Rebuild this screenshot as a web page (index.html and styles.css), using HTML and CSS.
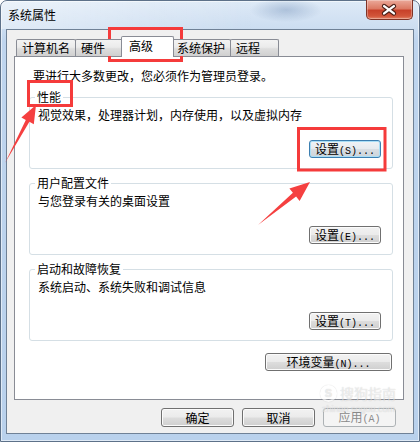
FILE: index.html
```html
<!DOCTYPE html>
<html lang="zh-CN">

<head>
  <meta charset="UTF-8">
  <meta name="viewport" content="width=device-width, initial-scale=1.0">
  <title>系统属性</title>
  <link rel="stylesheet" href="styles.css">
</head>

<body>
  <div class="screen">
    <div class="window">
      <div class="titlebar">
        <span class="title">系统属性</span>
        <div class="close">
          <svg width="47" height="20" viewBox="0 0 47 20">
            <path d="M18.5 6 L28.5 13.5 M28.5 6 L18.5 13.5" stroke="#4a1f17" stroke-width="4.6" stroke-linecap="round" fill="none"/>
            <path d="M18.5 6 L28.5 13.5 M28.5 6 L18.5 13.5" stroke="#fff" stroke-width="2.4" stroke-linecap="round" fill="none"/>
          </svg>
        </div>
      </div>

      <div class="client">
        <div class="tabs">
          <div class="tab">计算机名</div>
          <div class="tab">硬件</div>
          <div class="tab active">高级</div>
          <div class="tab">系统保护</div>
          <div class="tab">远程</div>
        </div>

        <div class="panel">
          <p class="notice">要进行大多数更改，您必须作为管理员登录。</p>

          <fieldset class="group">
            <legend>性能</legend>
            <p class="desc">视觉效果，处理器计划，内存使用，以及虚拟内存</p>
            <div class="actions"><button class="btn default">设置<span class="key">(S)...</span></button></div>
          </fieldset>

          <fieldset class="group">
            <legend>用户配置文件</legend>
            <p class="desc">与您登录有关的桌面设置</p>
            <div class="actions"><button class="btn">设置<span class="key">(E)...</span></button></div>
          </fieldset>

          <fieldset class="group">
            <legend>启动和故障恢复</legend>
            <p class="desc">系统启动、系统失败和调试信息</p>
            <div class="actions"><button class="btn">设置<span class="key">(T)...</span></button></div>
          </fieldset>

          <div class="env"><button class="btn wide">环境变量<span class="key">(N)...</span></button></div>
        </div>

        <div class="footer">
          <button class="btn dialog">确定</button>
          <button class="btn dialog">取消</button>
          <button class="btn dialog" disabled>应用<span class="key">(A)</span></button>
        </div>
      </div>
    </div>

    <div class="watermark">
      <div class="wm-top"><span class="wm-logo">S</span><span>搜狗指南</span></div>
      <div class="wm-url">zhinan.sogou.com</div>
    </div>

    <svg class="marks" width="420" height="442" viewBox="0 0 420 442">
      <rect x="109.5" y="28.5" width="72" height="32" fill="none" stroke="#f53b3b" stroke-width="3"/>
      <rect x="28.5" y="81.5" width="43" height="24" fill="none" stroke="#f53b3b" stroke-width="3"/>
      <rect x="298.5" y="128.5" width="86.5" height="41.5" fill="none" stroke="#f53b3b" stroke-width="3"/>
      <polygon points="5,163 25.8,120 21.4,117.6 36,105 33.8,124.2 29.4,121.8" fill="#f54040"/>
      <polygon points="258,225 292.9,192.8 289.4,188.5 310,182 299.6,200.9 296.1,196.6" fill="#f54040"/>
    </svg>
  </div>
</body>

</html>
```

FILE: styles.css
```css
* {
  box-sizing: border-box;
}

body {
  margin: 0;
  overflow: hidden;
  font-family: "Noto Sans CJK SC", "Noto Sans", sans-serif;
  font-size: 12px;
  color: #000;
}

.screen {
  width: 420px;
  height: 442px;
  position: relative;
}

.window {
  width: 420px;
  height: 442px;
  display: flex;
  flex-direction: column;
  padding: 0 5px 7px 5px;

  border: 1px solid #5d7189;
  border-radius: 7px 7px 0 0;
  background: linear-gradient(180deg, #deeaf7 0, #cddef1 26px, #bfd5ee 40px, #b9d1ec 100%);
  box-shadow: inset 0 0 0 1px rgba(255, 255, 255, 0.55);
}

/* title bar */

.titlebar {
  height: 28px;
  margin: 0 -5px;
  padding-left: 7px;
  display: flex;
  align-items: center;
  background:
    radial-gradient(ellipse 36px 12px at 285px 9px, rgba(110, 140, 180, 0.4), transparent),
    linear-gradient(90deg, rgba(255, 255, 255, 0.4), rgba(255, 255, 255, 0) 60%);
  border-radius: 6px 6px 0 0;
}

.title {
  line-height: 14px;
}

.close {
  width: 47px;
  height: 20px;
  margin: -1px 6px 0 auto;
  align-self: flex-start;

  border: 1px solid #7f3326;
  border-top: 0;
  border-radius: 0 0 5px 5px;
  background: linear-gradient(180deg, #eba99a 0%, #dc7a64 45%, #c8412a 55%, #d2553a 85%, #e4866a 100%);
  box-shadow: inset 0 0 0 1px rgba(255, 255, 255, 0.3);
  display: flex;
}

.close svg {
  margin-left: -1px;
}

/* client area */

.client {
  flex: 1;
  padding: 6px 9px 0 7px;
  background: #f0f0f0;
  border: 1px solid #6f8196;
}

.tabs {
  height: 20px;
  padding-left: 2px;
  display: flex;
  align-items: flex-end;
  position: relative;
  z-index: 1;
}

.tab {
  height: 17px;
  min-width: 49px;
  padding: 0 5px;
  margin-right: -1px;
  line-height: 16px;
  white-space: nowrap;

  border: 1px solid #898c95;
  border-bottom: 0;
  border-radius: 2px 2px 0 0;
  background: linear-gradient(180deg, #f3f3f3 0%, #ebebeb 45%, #dddddd 55%, #d0d0d0 100%);
}

.tab.active {
  height: 21px;
  min-width: 53px;
  padding: 1px 7px 0;
  margin: 0 -3px -1px -2px;
  background: #fff;
  position: relative;
}

.panel {
  height: 344px;
  padding: 12px 10px 0 14px;
  background: #fff;
  border: 1px solid #898c95;
}

.notice {
  margin: 0;
  padding-left: 4px;
  line-height: 14px;
}

.group {
  margin: 7px 0 0;
  padding: 0 11px 10px 8px;
  min-width: 0;
  border: 1px solid #d5dfe5;
  border-radius: 3px;
}

.group legend {
  margin-left: -3px;
  padding: 0 2px;
  line-height: 14px;
}

.desc {
  margin: 4px 0 0;
  line-height: 14px;
}

.actions {
  margin-top: 18px;
  display: flex;
  justify-content: flex-end;
}

.env {
  margin-top: 12px;
  padding-right: 1px;
  display: flex;
  justify-content: flex-end;
}

/* buttons */

.btn {
  width: 72px;
  height: 18px;
  padding: 0;
  font-family: inherit;
  font-size: 12px;
  line-height: 16px;
  color: #000;

  border: 1px solid #707070;
  border-radius: 3px;
  background: linear-gradient(180deg, #f2f2f2 0%, #ebebeb 48%, #dddddd 52%, #cfcfcf 100%);
  box-shadow: inset 0 0 0 1px #fbfbfb;
}

.btn .key {
  font-family: "Liberation Mono", "DejaVu Sans Mono", monospace;
  font-size: 10px;
}

.btn.default {
  border-color: #3c7fb1;
  box-shadow: inset 0 0 0 1px #a9def6;
  background: linear-gradient(180deg, #f0f3f6 0%, #e6ebef 48%, #d8dee3 52%, #cdd4da 100%);
}

.btn.wide {
  width: 127px;
}

.btn.dialog {
  width: 73px;
  height: 19px;
}

.btn:disabled {
  color: #8a8a8a;
  border-color: #adb2b5;
  background: #f4f4f4;
  box-shadow: none;
}

.footer {
  margin-top: 8px;
  padding-right: 8px;
  display: flex;
  justify-content: flex-end;
  gap: 8px;
}

/* overlays */

.watermark {
  position: absolute;
  left: 320px;
  top: 384px;
  color: rgba(255, 255, 255, 0.6);
  text-shadow: 0 0 1px rgba(0, 0, 0, 0.22);
  pointer-events: none;
}

.wm-top {
  display: flex;
  align-items: center;
  gap: 3px;
  font-size: 14px;
  line-height: 18px;
}

.wm-logo {
  width: 17px;
  height: 17px;
  border-radius: 50%;
  border: 2px solid rgba(255, 255, 255, 0.6);
  box-shadow: 0 0 1px rgba(0, 0, 0, 0.22);
  font-family: "Liberation Sans", sans-serif;
  font-weight: bold;
  font-size: 11px;
  line-height: 13px;
  text-align: center;
}

.wm-url {
  margin: 2px 0 0 2px;
  font-family: "Liberation Sans", sans-serif;
  font-size: 9px;
  line-height: 10px;
}

.marks {
  position: absolute;
  top: 0;
  left: 0;
  pointer-events: none;
}
```
